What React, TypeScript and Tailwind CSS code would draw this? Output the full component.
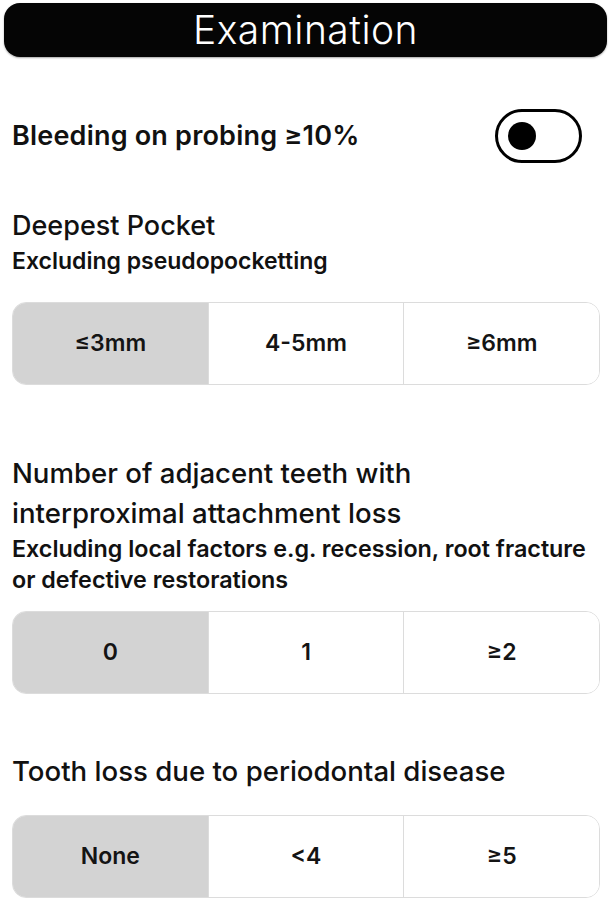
import { useState } from "react";

type SegmentProps = {
  options: string[];
  value: number;
  onChange: (index: number) => void;
};

function Segmented({ options, value, onChange }: SegmentProps) {
  return (
    <div className="flex h-[83px] overflow-hidden rounded-[14px] border border-[#dcdcdc] bg-white">
      {options.map((option, index) => (
        <button
          key={option}
          type="button"
          onClick={() => onChange(index)}
          className={`flex flex-1 items-center justify-center text-[23px] font-semibold text-[#141414] ${
            index > 0 ? "border-l border-[#dcdcdc]" : ""
          } ${value === index ? "bg-[#d3d3d3]" : "bg-white"}`}
        >
          {option}
        </button>
      ))}
    </div>
  );
}

export default function App() {
  const [bleeding, setBleeding] = useState(false);
  const [pocket, setPocket] = useState(0);
  const [teeth, setTeeth] = useState(0);
  const [loss, setLoss] = useState(0);

  return (
    <div className="min-h-[902px] w-[611px] bg-white font-['Inter',sans-serif] text-[#111]">
      <div className="px-1 pt-[3px]">
        <div className="flex h-[54px] items-center justify-center rounded-[16px] bg-[#050505] shadow-[0_1px_2px_rgba(0,0,0,0.35)]">
          <h1 className="text-[39px] font-light tracking-[0.5px] text-white">Examination</h1>
        </div>
      </div>

      <div className="pl-3 pr-[11px]">
        <div className="mt-[52px] flex h-[54px] items-center justify-between">
          <span className="text-[27px] font-semibold tracking-[0.2px]">Bleeding on probing ≥10%</span>
          <button
            type="button"
            onClick={() => setBleeding(!bleeding)}
            className={`mr-[18px] flex h-[54px] w-[87px] items-center rounded-full border-[3px] border-black px-[10px] ${
              bleeding ? "justify-end" : "justify-start"
            }`}
          >
            <span className="h-[28px] w-[28px] rounded-full bg-black" />
          </button>
        </div>

        <div className="mt-[43px]">
          <h2 className="text-[27px] font-medium leading-[40px]">Deepest Pocket</h2>
          <p className="text-[23px] font-semibold leading-[30px]">Excluding pseudopocketting</p>
        </div>
        <div className="mt-[26px]">
          <Segmented options={["≤3mm", "4-5mm", "≥6mm"]} value={pocket} onChange={setPocket} />
        </div>

        <div className="mt-[68px]">
          <h2 className="text-[27.6px] font-medium leading-[40px]">
            Number of adjacent teeth with
            <br />
            interproximal attachment loss
          </h2>
          <p className="text-[23.3px] font-semibold leading-[31px]">
            Excluding local factors e.g. recession, root fracture or defective restorations
          </p>
        </div>
        <div className="mt-[16px]">
          <Segmented options={["0", "1", "≥2"]} value={teeth} onChange={setTeeth} />
        </div>

        <h2 className="mt-[57px] text-[27.6px] font-medium leading-[40px]">
          Tooth loss due to periodontal disease
        </h2>
        <div className="mt-[24px]">
          <Segmented options={["None", "<4", "≥5"]} value={loss} onChange={setLoss} />
        </div>
      </div>
    </div>
  );
}
